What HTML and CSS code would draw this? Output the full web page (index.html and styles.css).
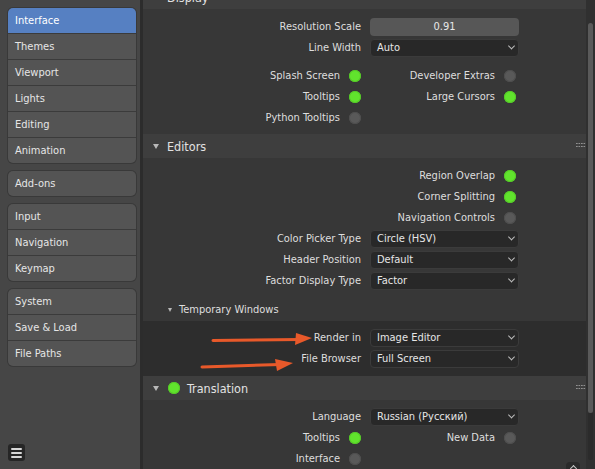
FILE: index.html
```html
<!DOCTYPE html>
<html>
<head>
<meta charset="utf-8">
<link rel="stylesheet" href="styles.css">
</head>
<body>
<div class="app">
  <nav class="sidebar">
    <div class="group">
      <div class="item active">Interface</div>
      <div class="item">Themes</div>
      <div class="item">Viewport</div>
      <div class="item">Lights</div>
      <div class="item">Editing</div>
      <div class="item">Animation</div>
    </div>
    <div class="group">
      <div class="item">Add-ons</div>
    </div>
    <div class="group">
      <div class="item">Input</div>
      <div class="item">Navigation</div>
      <div class="item">Keymap</div>
    </div>
    <div class="group">
      <div class="item">System</div>
      <div class="item">Save &amp; Load</div>
      <div class="item">File Paths</div>
    </div>
    <div class="menu-btn">
      <svg width="17" height="17" viewBox="0 0 17 17"><rect x="0" y="0" width="17" height="17" rx="3" fill="#262626"/><rect x="3" y="4" width="11" height="2" rx="1" fill="#d8d8d8"/><rect x="3" y="8" width="11" height="2" rx="1" fill="#d8d8d8"/><rect x="3" y="12" width="11" height="2" rx="1" fill="#d8d8d8"/></svg>
    </div>
  </nav>
  <div class="divider"></div>
  <main class="region">
    <div class="panels">
      <section class="panel">
        <header class="phead"><span class="tri"></span><span class="ptitle">Display</span><span class="grip"></span></header>
        <div class="pbody">
          <div class="row"><div class="lab">Resolution Scale</div><div class="num">0.91</div></div>
          <div class="row"><div class="lab">Line Width</div><div class="drop"><span>Auto</span><span class="chev"></span></div></div>
          <div class="row sp"><div class="tog left"><span>Splash Screen</span><i class="dot on"></i></div><div class="tog right"><span>Developer Extras</span><i class="dot"></i></div></div>
          <div class="row"><div class="tog left"><span>Tooltips</span><i class="dot on"></i></div><div class="tog right"><span>Large Cursors</span><i class="dot on"></i></div></div>
          <div class="row"><div class="tog left"><span>Python Tooltips</span><i class="dot"></i></div></div>
        </div>
      </section>
      <section class="panel">
        <header class="phead"><span class="tri"></span><span class="ptitle">Editors</span><span class="grip"></span></header>
        <div class="pbody">
          <div class="row"><div></div><div class="tog right"><span>Region Overlap</span><i class="dot on"></i></div></div>
          <div class="row"><div></div><div class="tog right"><span>Corner Splitting</span><i class="dot on"></i></div></div>
          <div class="row"><div></div><div class="tog right"><span>Navigation Controls</span><i class="dot"></i></div></div>
          <div class="row"><div class="lab">Color Picker Type</div><div class="drop"><span>Circle (HSV)</span><span class="chev"></span></div></div>
          <div class="row"><div class="lab">Header Position</div><div class="drop"><span>Default</span><span class="chev"></span></div></div>
          <div class="row"><div class="lab">Factor Display Type</div><div class="drop"><span>Factor</span><span class="chev"></span></div></div>
          <div class="shead"><span class="tri small"></span><span>Temporary Windows</span></div>
          <div class="sbody">
            <div class="row"><div class="lab">Render in</div><div class="drop"><span>Image Editor</span><span class="chev"></span></div></div>
            <div class="row"><div class="lab">File Browser</div><div class="drop"><span>Full Screen</span><span class="chev"></span></div></div>
          </div>
        </div>
      </section>
      <section class="panel">
        <header class="phead"><span class="tri"></span><i class="dot on hdot"></i><span class="ptitle tt">Translation</span><span class="grip"></span></header>
        <div class="pbody">
          <div class="row"><div class="lab">Language</div><div class="drop"><span>Russian (Русский)</span><span class="chev"></span></div></div>
          <div class="row"><div class="tog left"><span>Tooltips</span><i class="dot on"></i></div><div class="tog right"><span>New Data</span><i class="dot"></i></div></div>
          <div class="row"><div class="tog left"><span>Interface</span><i class="dot"></i></div></div>
        </div>
      </section>
    </div>
    <div class="scroll"><div class="thumb"></div><div class="track"></div></div>
    <div class="tab"><span class="up"></span></div>
  </main>
</div>
<svg class="arrows" width="595" height="469" viewBox="0 0 595 469">
  <line x1="213" y1="340.5" x2="300" y2="339.5" stroke="#e8592a" stroke-width="3" stroke-linecap="round"/>
  <polygon points="312,338 296,333 295,345" fill="#e8592a"/>
  <line x1="202" y1="367" x2="280" y2="364.5" stroke="#e8592a" stroke-width="3" stroke-linecap="round"/>
  <polygon points="293,363 275,359 277,371" fill="#e8592a"/>
</svg>
</body>
</html>
```

FILE: styles.css
```css
* { box-sizing: border-box; margin: 0; padding: 0; }
html, body { width: 595px; height: 469px; overflow: hidden; background: #303030; }
body {
  font-family: "DejaVu Sans Condensed", "DejaVu Sans", sans-serif;
  font-stretch: semi-condensed;
  font-size: 11px;
  color: #dedede;
  position: relative;
}
.app { display: flex; height: 469px; }

/* sidebar */
.sidebar {
  width: 140px;
  background: #464646;
  display: flex;
  flex-direction: column;
  gap: 8px;
  padding: 8px 0 0 8px;
}
.group {
  width: 128px;
  border-radius: 5px;
  overflow: hidden;
  box-shadow: 0 0 0 1px #393939;
  display: flex;
  flex-direction: column;
  gap: 1px;
  background: #3b3b3b;
}
.item {
  height: 25px;
  background: #545454;
  padding-left: 7px;
  display: flex;
  align-items: center;
  color: #e6e6e6;
}
.item.active { background: #5680c2; color: #ffffff; }
.menu-btn { margin-top: auto; margin-bottom: 8px; height: 17px; }
.menu-btn svg { display: block; }
.divider { width: 3px; background: #2c2c2c; }

/* main region */
.region { flex: 1; display: flex; background: #303030; position: relative; }
.panels { width: 443px; margin-top: -15px; }
.panel { background: #373737; }
.phead {
  height: 24px;
  background: #3e3e3e;
  display: flex;
  align-items: center;
  padding-left: 10px;
  font-size: 12.5px;
  color: #e2e2e2;
}
.tri {
  width: 0; height: 0;
  border-left: 3px solid transparent;
  border-right: 3px solid transparent;
  border-top: 5px solid #b8b8b8;
}
.tri.small { border-left-width: 2.5px; border-right-width: 2.5px; border-top-width: 4px; }
.ptitle { margin-left: 8px; }
.ptitle.tt { margin-left: 7px; }
.hdot { margin-left: 9px; }
.grip {
  margin-left: auto;
  margin-right: 0;
  width: 10px;
  height: 6px;
  background-image: radial-gradient(circle at 0.5px 0.5px, #9a9a9a 0.8px, transparent 1px);
  background-size: 2.5px 3px;
  opacity: 0.9;
}

.pbody { padding: 7px 0 6px; }
.panel:last-child .pbody { padding-top: 6px; }
.row {
  display: grid;
  grid-template-columns: 227px 149px;
  height: 21px;
  align-items: center;
}
.row.sp { margin-top: 7px; }
.lab { text-align: right; padding-right: 9px; white-space: nowrap; }
.num {
  height: 18px;
  background: #575757;
  border-radius: 4px;
  text-align: center;
  line-height: 18px;
  color: #e8e8e8;
}
.drop {
  height: 18px;
  background: #282828;
  border: 1px solid #3b3b3b;
  border-radius: 4px;
  padding: 0 3px 0 6px;
  display: flex;
  align-items: center;
  justify-content: space-between;
  color: #e6e6e6;
}
.chev {
  width: 5px; height: 5px;
  border-right: 1.3px solid #bdbdbd;
  border-bottom: 1.3px solid #bdbdbd;
  transform: translateY(-1.5px) rotate(45deg);
  margin-right: 1px;
}
.tog {
  display: flex;
  justify-content: flex-end;
  align-items: center;
  gap: 9px;
  white-space: nowrap;
}
.tog.left { padding-right: 9px; }
.tog.right { grid-column: 2; padding-right: 3px; }
.tog.left + .tog.right { grid-column: 2; }
.dot {
  display: block;
  width: 12px; height: 12px;
  border-radius: 50%;
  background: #595959;
  box-shadow: inset 0 0 0 1px #4e4e4e;
  flex: none;
}
.dot.on { background: #61e32d; box-shadow: inset 0 0 0 1px #55c927; }

.shead {
  height: 23px;
  margin-top: 7px;
  display: flex;
  align-items: center;
  padding-left: 25px;
  gap: 7px;
}
.sbody { background: #2d2d2d; padding: 6px 0 7px; margin-bottom: -6px; }

/* scrollbar */
.scroll {
  flex: 1;
  display: flex;
  flex-direction: column;
  align-items: center;
  padding: 23px 0 9px;
}
.thumb { width: 5px; height: 390px; background: #5a5a5a; border-radius: 3px; }
.track { width: 5px; flex: 1; background: #2b2b2b; border-radius: 0 0 3px 3px; }

.tab {
  position: absolute;
  left: 423px;
  top: 462px;
  width: 14px;
  height: 10px;
  background: #2a2a2a;
  border-radius: 4px 4px 0 0;
  display: flex;
  justify-content: center;
}
.up {
  margin-top: 4px;
  width: 5px; height: 5px;
  border-left: 1.3px solid #c8c8c8;
  border-top: 1.3px solid #c8c8c8;
  transform: rotate(45deg);
}

.arrows { position: absolute; left: 0; top: 0; pointer-events: none; }
```
